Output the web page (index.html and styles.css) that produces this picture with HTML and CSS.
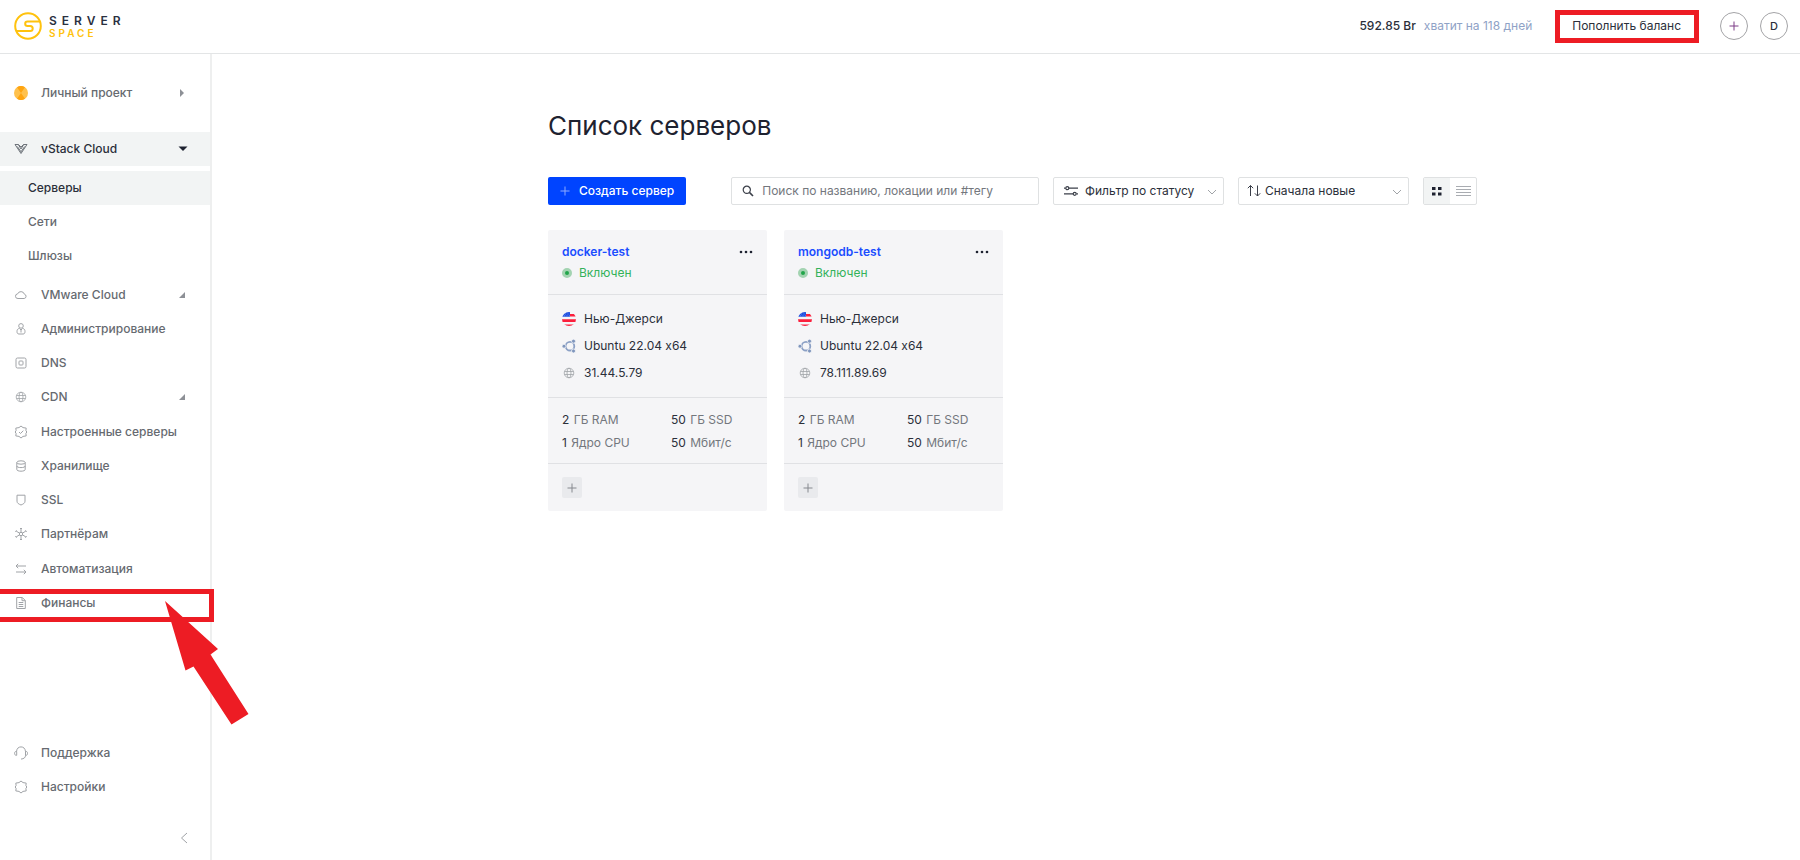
FILE: index.html
```html
<!DOCTYPE html>
<html lang="ru">
<head>
<meta charset="utf-8">
<meta name="viewport" content="width=device-width, initial-scale=1">
<title>Список серверов — Serverspace</title>
<link rel="stylesheet" href="styles.css">
</head>
<body>
<svg class="sprite" aria-hidden="true">
  <symbol id="globe" viewBox="0 0 14 14"><g fill="none" stroke="currentColor" stroke-width=".8"><circle cx="7" cy="7" r="4.800"/><ellipse cx="7" cy="7" rx="2" ry="4.800"/><path d="M2.500 5.500h9M2.500 8.500h9"/></g></symbol>
  <symbol id="flag-us" viewBox="0 0 14 14"><clipPath id="disc"><circle cx="7" cy="7" r="7"/></clipPath><g clip-path="url(#disc)"><path fill="#f5f5f7" d="M0 0h14v14H0z"/><path fill="#fb1f3c" d="M8 2h6v2.500H8zM0 7.200h14v2.800H0zM0 12.500h14V14H0z"/><path fill="#1f4fe0" d="M0 0h8v4.800H0z"/><path stroke="#8fa9f2" stroke-width=".6" stroke-dasharray="1 1.500" d="M3 2h5M2 3.800h6"/></g></symbol>
  <symbol id="ubuntu" viewBox="0 0 14 14"><circle cx="8" cy="7.200" r="4.300" fill="none" stroke="#8ba0c5" stroke-width="1.800"/><g fill="#7f96bd" stroke="#f5f5f7" stroke-width=".8"><circle cx="2" cy="7.200" r="2"/><circle cx="11.500" cy="2.200" r="2"/><circle cx="11.500" cy="12" r="2"/></g></symbol>
  <symbol id="plus" viewBox="0 0 10 10"><path stroke="currentColor" fill="none" d="M5 .5v9M.5 5h9"/></symbol>
  <symbol id="chevron" viewBox="0 0 10 10"><path stroke="currentColor" fill="none" d="M1 3l4 4 4-4"/></symbol>
  <symbol id="corner" viewBox="0 0 6 6"><path fill="currentColor" d="M6 0v6H0z"/></symbol>
</svg>

<header class="topbar">
  <a class="logo" href="#" aria-label="Serverspace">
    <svg class="logo-mark" viewBox="0 0 28 28" fill="none" stroke="#ffc20e" stroke-width="2" aria-hidden="true"><circle cx="14" cy="14" r="12.800"/><path d="M26 9.500H13.500a2.300 2.300 0 0 0 0 4.600h2.700a2.500 2.500 0 0 1 0 5H2.600"/></svg>
    <span class="wordmark"><span class="word-server">SERVER</span><span class="word-space">SPACE</span></span>
  </a>
  <div class="account">
    <p class="balance"><strong>592.85 Br</strong><span>хватит на 118 дней</span></p>
    <button class="topup" type="button">Пополнить баланс<span class="mark mark-topup"></span></button>
    <div class="round-group">
      <button class="round add" type="button" aria-label="Добавить"><svg class="i10"><use href="#plus"/></svg></button>
      <button class="round" type="button">D</button>
    </div>
  </div>
</header>

<div class="layout">
  <nav class="sidebar" aria-label="Меню">
    <a class="item project" href="#"><svg class="icon avatar" viewBox="0 0 14 14"><circle cx="7" cy="7" r="7" fill="#ffc14d"/><path fill="#ffa410" d="M7 7L3 1.300a7 7 0 0 1 8 0zM7 7l4 5.700a7 7 0 0 1-8 0z"/></svg>Личный проект<svg class="tail caret" viewBox="0 0 6 8"><path fill="#8d9096" d="M1 0l4 4-4 4z"/></svg></a>

    <a class="item open" href="#"><svg class="icon" viewBox="0 0 14 14"><path d="M1 2.500h3.300L7 7l2.700-4.500H13l-6 9zM3.300 4.500L7 9.800l3.700-5.300M4.300 2.500L7 5l2.700-2.500" stroke-width=".9"/></svg>vStack Cloud<svg class="tail down" viewBox="0 0 10 6"><path fill="#1e2230" d="M.5.5h9L5 5z"/></svg></a>
    <ul class="sub">
      <li><a class="subitem current" href="#">Серверы</a></li>
      <li><a class="subitem" href="#">Сети</a></li>
      <li><a class="subitem" href="#">Шлюзы</a></li>
    </ul>

    <div class="groups">
      <div class="group">
        <a class="item" href="#"><svg class="icon" viewBox="0 0 14 14"><path d="M4 10.500a2.300 2.300 0 0 1-.4-4.600 3.600 3.600 0 0 1 6.800.3 2.200 2.200 0 0 1-.2 4.300z"/></svg>VMware Cloud<svg class="tail corner"><use href="#corner"/></svg></a>
        <a class="item" href="#"><svg class="icon" viewBox="0 0 14 14"><path d="M4.800 6.500C3.500 7 3 8 3 9.500 3 11 3.500 12 5 12h4c1.500 0 2-1 2-2.500 0-1.500-.5-2.500-1.800-3M5.300 6.300L7 8l1.700-1.700M7 8v2.500"/><circle cx="7" cy="3.900" r="2.300"/></svg>Администрирование</a>
        <a class="item" href="#"><svg class="icon" viewBox="0 0 14 14"><rect x="2" y="2" width="10" height="10" rx="1.500"/><rect x="5" y="5" width="4" height="4" rx=".8"/></svg>DNS</a>
        <a class="item" href="#"><svg class="icon plain"><use href="#globe"/></svg>CDN<svg class="tail corner"><use href="#corner"/></svg></a>
      </div>
      <div class="group">
        <a class="item" href="#"><svg class="icon" viewBox="0 0 14 14"><path d="M7 1l2 1.600 3.200.5-.3 2.400.9 1.500-.9 1.500.3 2.400-3.200.5L7 13l-2-1.600-3.200-.5.3-2.400L1.200 7l.9-1.500-.3-2.400L5 2.600zM5 7l1.500 1.500L9.300 5.700"/></svg>Настроенные серверы</a>
        <a class="item" href="#"><svg class="icon" viewBox="0 0 14 14"><ellipse cx="7" cy="3.500" rx="4.200" ry="1.700"/><path d="M2.800 3.500v7c0 1 1.900 1.700 4.200 1.700s4.200-.7 4.200-1.700v-7M2.800 7c0 1 1.900 1.600 4.200 1.600S11.200 8 11.200 7"/></svg>Хранилище</a>
        <a class="item" href="#"><svg class="icon" viewBox="0 0 14 14"><path d="M3 2.200h8v6c0 2-1.800 2.900-4 3.800-2.200-.9-4-1.800-4-3.800z"/></svg>SSL</a>
        <a class="item" href="#"><svg class="icon" viewBox="0 0 14 14"><path d="M7 1.500v11M2.300 4.200l9.400 5.600M11.700 4.200L2.300 9.800"/><circle cx="7" cy="7" r="1.700" fill="#fff"/><path d="M6 1.500h2M6 12.500h2M1.500 5l1-1.700M12.500 5l-1-1.700M1.500 9l1 1.700M12.500 9l-1 1.700"/></svg>Партнёрам</a>
      </div>
      <div class="group">
        <a class="item" href="#"><svg class="icon" viewBox="0 0 14 14"><path d="M12 4H2M4.200 1.800L2 4l2.200 2.200M2 10h10M9.800 7.800L12 10l-2.200 2.200"/></svg>Автоматизация</a>
        <a class="item finance" href="#"><svg class="icon" viewBox="0 0 14 14"><path d="M2.700 1.500h5.600l3 3v8H2.700zM8 1.500v3.200h3.200M4.700 6.500h4.600M4.700 8.500h4.600M4.700 10.500h4.600"/></svg>Финансы<span class="mark mark-finance"></span><svg class="arrow" viewBox="0 0 84 124" aria-hidden="true"><path fill="#ed1c24" d="M0 0l53 48-7.500 5.500L83.500 113 66.500 123.500 28.500 65.500 20.500 69.500z"/></svg></a>
      </div>
    </div>

    <div class="foot">
      <a class="item" href="#"><svg class="icon" viewBox="0 0 14 14"><path d="M2.500 5.500C2.800 2.500 4.500.9 7 .9s4.200 1.600 4.500 4.600v4c0 2-1.500 3.300-4.500 3.600M2.700 5.500C1.200 5.300.6 6 .6 7.300S1.200 9.500 2.700 9.300zM11.500 5.500c1.500-.2 2 .5 2 1.800s-.5 2.200-2 2z"/></svg>Поддержка</a>
      <a class="item" href="#"><svg class="icon" viewBox="0 0 14 14"><path d="M7 1l2 1.600 3.200.5-.3 2.400.9 1.500-.9 1.500.3 2.400-3.200.5L7 13l-2-1.600-3.200-.5.3-2.400L1.200 7l.9-1.500-.3-2.400L5 2.600z"/></svg>Настройки</a>
      <button class="collapse" type="button" aria-label="Свернуть меню"><svg viewBox="0 0 8 12"><path d="M7 1L1.500 6 7 11"/></svg></button>
    </div>
  </nav>

  <main class="main">
    <div class="content">
      <h1>Список серверов</h1>
      <div class="toolbar">
        <button class="create" type="button"><svg class="i10"><use href="#plus"/></svg>Создать сервер</button>
        <label class="field search"><svg class="i12" viewBox="0 0 12 12" fill="none" stroke="#3b3f49" stroke-width="1.200"><circle cx="4.800" cy="4.800" r="3.600"/><path d="M7.400 7.400l3.600 3.600" stroke-width="1.600"/></svg><input type="search" aria-label="Поиск" placeholder="Поиск по названию, локации или #тегу"></label>
        <label class="field filter"><svg class="i14" viewBox="0 0 14 14" fill="none" stroke="#3b3f49" stroke-width="1.200"><path d="M0 4.200h1.500M5 4.200h9M0 9.800h9M12.500 9.800H14"/><circle cx="3.300" cy="4.200" r="1.500"/><circle cx="10.700" cy="9.800" r="1.500"/></svg><select aria-label="Фильтр по статусу"><option>Фильтр по статусу</option></select><svg class="i10 chev"><use href="#chevron"/></svg></label>
        <label class="field sort"><svg class="i14" viewBox="0 0 14 14" fill="none" stroke="#3b3f49"><path d="M3.500 12V1.500M.8 4.200l2.700-2.700 2.700 2.700M10.500 1.500V12M7.800 9.300l2.700 2.700 2.700-2.700"/></svg><select aria-label="Сортировка"><option>Сначала новые</option></select><svg class="i10 chev"><use href="#chevron"/></svg></label>
        <div class="views">
          <button class="view active" type="button" aria-label="Плитка"><svg class="i10" viewBox="0 0 10 10"><path fill="#1e2230" d="M0 1h3.500v3H0zM6 1h3.500v3H6zM0 6.500h3.500v3H0zM6 6.500h3.500v3H6z"/></svg></button>
          <button class="view" type="button" aria-label="Список"><svg class="i15" viewBox="0 0 15 11"><path stroke="#a9acb1" d="M0 .5h15M0 3.500h15M0 6.500h15M0 9.500h15"/></svg></button>
        </div>
      </div>

      <div class="cards">
        <article class="card">
          <div class="card-head">
            <div class="line"><a class="name" href="#">docker-test</a><button class="more" type="button" aria-label="Действия"><svg viewBox="0 0 14 4"><g fill="#1e2230"><circle cx="2" cy="2" r="1.300"/><circle cx="7" cy="2" r="1.300"/><circle cx="12" cy="2" r="1.300"/></g></svg></button></div>
            <p class="status"><span class="dot"></span>Включен</p>
          </div>
          <ul class="facts">
            <li><svg class="i14"><use href="#flag-us"/></svg>Нью-Джерси</li>
            <li><svg class="i14"><use href="#ubuntu"/></svg>Ubuntu 22.04 x64</li>
            <li><svg class="i14 muted"><use href="#globe"/></svg>31.44.5.79</li>
          </ul>
          <div class="specs"><p><b>2</b> ГБ RAM</p><p><b>50</b> ГБ SSD</p><p><b>1</b> Ядро CPU</p><p><b>50</b> Мбит/с</p></div>
          <div class="card-foot"><button class="tag" type="button" aria-label="Добавить тег"><svg class="i10"><use href="#plus"/></svg></button></div>
        </article>
        <article class="card">
          <div class="card-head">
            <div class="line"><a class="name" href="#">mongodb-test</a><button class="more" type="button" aria-label="Действия"><svg viewBox="0 0 14 4"><g fill="#1e2230"><circle cx="2" cy="2" r="1.300"/><circle cx="7" cy="2" r="1.300"/><circle cx="12" cy="2" r="1.300"/></g></svg></button></div>
            <p class="status"><span class="dot"></span>Включен</p>
          </div>
          <ul class="facts">
            <li><svg class="i14"><use href="#flag-us"/></svg>Нью-Джерси</li>
            <li><svg class="i14"><use href="#ubuntu"/></svg>Ubuntu 22.04 x64</li>
            <li><svg class="i14 muted"><use href="#globe"/></svg>78.111.89.69</li>
          </ul>
          <div class="specs"><p><b>2</b> ГБ RAM</p><p><b>50</b> ГБ SSD</p><p><b>1</b> Ядро CPU</p><p><b>50</b> Мбит/с</p></div>
          <div class="card-foot"><button class="tag" type="button" aria-label="Добавить тег"><svg class="i10"><use href="#plus"/></svg></button></div>
        </article>
      </div>
    </div>
  </main>
</div>
</body>
</html>
```
FILE: styles.css
```css
* { box-sizing: border-box; }

body {
  margin: 0;
  min-height: 100vh;
  display: flex;
  flex-direction: column;
  background: #fff;
  color: #2b2f3a;
  font: 12px/20px Inter, "Liberation Sans", sans-serif;
  font-variant-ligatures: no-contextual;
}

button, input, select { font: inherit; color: inherit; margin: 0; padding: 0; border: 0; background: none; }
button { cursor: pointer; }
a { color: inherit; text-decoration: none; }
p, ul, h1 { margin: 0; padding: 0; }
ul { list-style: none; }
svg { flex: none; display: block; }

.sprite { position: absolute; width: 0; height: 0; }
.i10 { width: 10px; height: 10px; }
.i12 { width: 12px; height: 12px; }
.i14 { width: 14px; height: 14px; }
.i15 { width: 15px; height: 11px; }

/* Top bar */
.topbar {
  display: flex;
  align-items: center;
  justify-content: space-between;
  height: 54px;
  padding: 0 12px 1px 14px;
  border-bottom: 1px solid #e3e5e6;
}
.logo { display: flex; align-items: center; gap: 7px; }
.logo-mark { width: 28px; height: 28px; }
.wordmark { display: flex; flex-direction: column; }
.word-server { font-size: 12px; line-height: 13px; font-weight: 600; letter-spacing: 5px; color: #2a3040; }
.word-space { font-size: 10px; line-height: 12px; font-weight: 600; letter-spacing: 3px; color: #ffc20e; }

.account { display: flex; align-items: center; }
.balance { display: flex; gap: 8px; color: #8fa2c6; }
.balance strong { font-weight: 500; color: #2b2f3a; }
.topup { position: relative; margin: 0 39px 0 40px; }
.round-group { display: flex; gap: 12px; }
.round {
  display: grid;
  place-items: center;
  width: 28px;
  height: 28px;
  border: 1px solid #a3a3a6;
  border-radius: 50%;
  font-size: 11px;
  font-weight: 500;
}
.add { color: #7d3d86; }

/* Red annotation marks */
.mark { position: absolute; border: 5px solid #ed1c24; pointer-events: none; }
.mark-topup { inset: -6px -18px -7px -17px; }
.mark-finance { inset: 3px -4px -2px -5px; }
.arrow { position: absolute; left: 165px; top: 15px; width: 84px; height: 124px; pointer-events: none; }

/* Sidebar */
.layout { display: flex; flex: 1; }
.sidebar {
  display: flex;
  flex-direction: column;
  flex: none;
  width: 212px;
  padding: 22px 0 5px;
  border-right: 2px solid #eeefef;
  color: #666a70;
  font-weight: 500;
}
.item {
  position: relative;
  display: flex;
  align-items: center;
  gap: 13px;
  height: 34px;
  padding: 0 25px 0 14px;
}
.icon { width: 14px; height: 14px; fill: none; stroke: #a0a3a7; }
.plain { stroke: none; color: #a0a3a7; }
.avatar { stroke: none; }
.tail { margin-left: auto; }
.caret { width: 6px; height: 8px; }
.down { width: 10px; height: 6px; }
.corner { width: 6px; height: 6px; color: #8d9096; }
.project { margin-bottom: 22px; }
.open { background: #f2f4f4; color: #2b2f3a; padding-right: 22px; }
.open .icon { stroke: #60656d; }
.sub { margin-top: 5px; }
.subitem { display: flex; align-items: center; height: 34px; padding-left: 28px; }
.current { background: #f2f4f4; color: #2b2f3a; }
.groups { display: flex; flex-direction: column; gap: 1px; margin-top: 5px; }
.foot { display: flex; flex-direction: column; margin-top: auto; }
.collapse { align-self: flex-end; width: 52px; height: 34px; margin-top: 17px; display: grid; place-items: center; }
.collapse svg { width: 8px; height: 12px; fill: none; stroke: #a0a3a7; }

/* Page content */
.main { flex: 1; padding: 52px 24px; }
.content { max-width: 942px; margin: 0 auto; padding-left: 13px; }
h1 { font-size: 26px; line-height: 40px; font-weight: 400; color: #1e2230; }

.toolbar { display: flex; gap: 14px; margin-top: 31px; }
.create {
  display: flex;
  align-items: center;
  gap: 9px;
  height: 28px;
  padding: 0 12px;
  margin-right: 31px;
  border-radius: 2px;
  background: #0044ff;
  color: #fff;
  font-weight: 500;
  white-space: nowrap;
}
.create svg { color: #8caaff; }
.field {
  position: relative;
  display: flex;
  align-items: center;
  height: 28px;
  padding: 0 10px;
  border: 1px solid #dfe1e2;
  border-radius: 2px;
}
.search { flex: 1; gap: 8px; }
.search input { flex: 1; min-width: 0; outline: none; }
.search input::placeholder { color: #73777d; opacity: 1; }
.filter { width: 171px; gap: 7px; }
.sort { width: 171px; gap: 4px; padding-left: 8px; }
.field select { flex: 1; min-width: 0; appearance: none; outline: none; }
.chev { position: absolute; right: 6px; top: 9px; color: #a0a3a7; pointer-events: none; }
.views { display: flex; border: 1px solid #dfe1e2; border-radius: 2px; }
.view { display: grid; place-items: center; width: 26px; height: 26px; }
.active { background: #f2f4f4; }

.cards { display: flex; flex-wrap: wrap; gap: 17px; margin-top: 25px; }
.card { width: 219px; background: #f5f5f7; border-radius: 2px; }
.card > * { padding: 0 14px; border-bottom: 1px solid #e0e1e4; }
.card > :last-child { border-bottom: 0; }
.card > .card-head { padding-top: 11px; padding-bottom: 11px; }
.line { display: flex; align-items: center; justify-content: space-between; height: 21px; }
.name { color: #1a4dff; font-weight: 600; }
.more svg { width: 14px; height: 4px; }
.status { display: flex; align-items: center; gap: 7px; height: 21px; color: #34b25a; }
.dot { width: 10px; height: 10px; border: 3px solid #a3d3b1; border-radius: 50%; background: #21a54a; }
.card > .facts { padding-top: 10px; padding-bottom: 11px; }
.facts li { display: flex; align-items: center; gap: 8px; height: 27px; }
.muted { color: #a0a3a7; }
.card > .specs { display: grid; grid-template-columns: 109px 1fr; padding-top: 10px; padding-bottom: 9px; color: #73777d; }
.specs p { line-height: 23px; }
.specs b { margin-right: 1px; font-weight: 400; color: #2b2f3a; }
.card > .card-foot { padding-top: 13px; padding-bottom: 13px; }
.tag { display: grid; place-items: center; width: 20px; height: 21px; border-radius: 2px; background: #e9eaed; color: #85888e; }
```
